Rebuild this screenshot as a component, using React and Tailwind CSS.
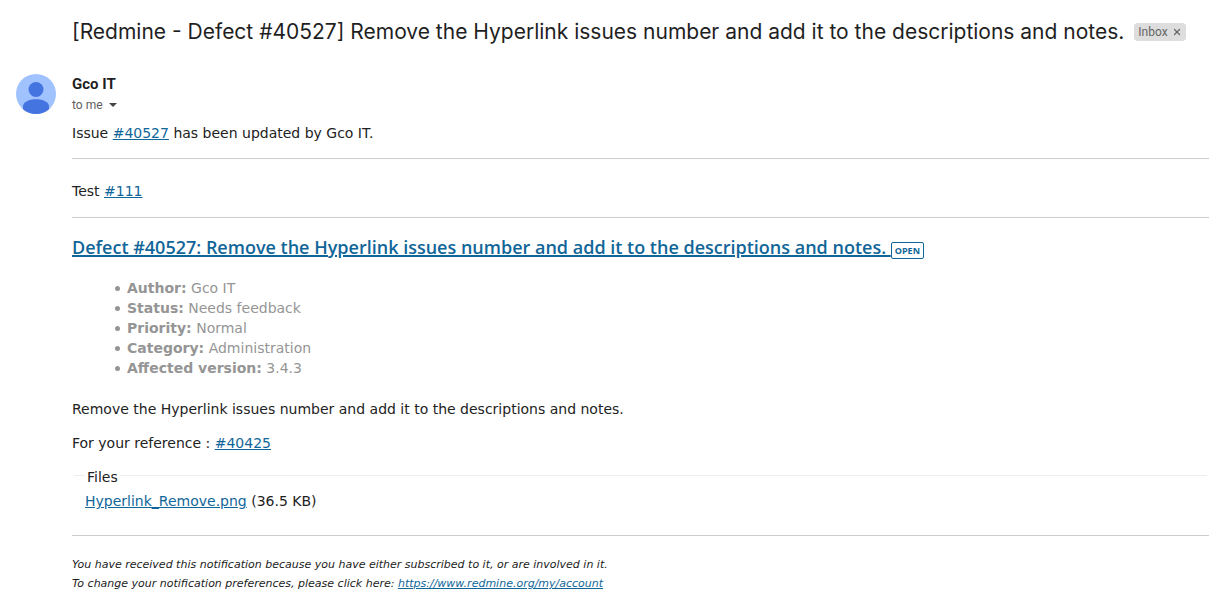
import { X } from "lucide-react";

const details = [
  { label: "Author", value: "Gco IT" },
  { label: "Status", value: "Needs feedback" },
  { label: "Priority", value: "Normal" },
  { label: "Category", value: "Administration" },
  { label: "Affected version", value: "3.4.3" },
];

const MailLink = ({ href, children }) => (
  <a href={href} className="text-[#116699] underline">{children}</a>
);

const Avatar = () => (
  <svg viewBox="0 0 40 40" className="w-10 h-10 shrink-0" role="img" aria-label="Gco IT">
    <defs>
      <clipPath id="avatar-clip">
        <circle cx="20" cy="20" r="20" />
      </clipPath>
    </defs>
    <g clipPath="url(#avatar-clip)">
      <rect width="40" height="40" fill="#a0c3ff" />
      <circle cx="20" cy="15.5" r="7.5" fill="#4374e0" />
      <path d="M7 32.5C7 28 13 25.3 20 25.3S33 28 33 32.5V40H7z" fill="#4374e0" />
    </g>
  </svg>
);

const SubjectBar = () => (
  <header className="flex items-center gap-2.5 pl-[72px] pr-4 pt-4">
    <h1 className="font-['Inter',sans-serif] text-[21px] leading-8 text-[#1f1f1f]">
      [Redmine - Defect #40527] Remove the Hyperlink issues number and add it to the descriptions and notes.
    </h1>
    <span className="flex items-center gap-1 h-[18px] px-1 rounded bg-[#dddddd] text-[#666666] font-['Roboto',sans-serif] text-xs whitespace-nowrap">
      Inbox
      <button type="button" aria-label="Remove label Inbox">
        <X className="w-2.5 h-2.5" strokeWidth={3} />
      </button>
    </span>
  </header>
);

const Sender = () => (
  <div className="font-['Roboto',sans-serif]">
    <div className="text-[15px] leading-5 font-bold text-[#1f1f1f]">Gco IT</div>
    <button type="button" className="flex items-center gap-1.5 mt-px text-xs leading-5 text-[#5e5e5e]">
      to me
      <svg viewBox="0 0 8 4" className="w-2 h-1" fill="#444444">
        <path d="M0 0h8L4 4z" />
      </svg>
    </button>
  </div>
);

const MailBody = () => (
  <div className="mt-2 font-['DejaVu_Sans',sans-serif] text-sm leading-5 text-[#222222]">
    <p>
      Issue <MailLink href="#40527">#40527</MailLink> has been updated by Gco IT.
    </p>
    <hr className="my-[15px] border-[#cccccc]" />
    <p className="py-[7px]">
      Test <MailLink href="#111">#111</MailLink>
    </p>
    <hr className="mt-[9px] border-[#cccccc]" />

    <div className="flex items-center mt-[15px]">
      <h2 className="font-['Open_Sans',sans-serif] text-lg leading-7 font-semibold">
        <a href="#40527" className="text-[#116699] underline decoration-2 whitespace-pre">
          {"Defect #40527: Remove the Hyperlink issues number and add it to the descriptions and notes. "}
        </a>
      </h2>
      <span className="mt-1.5 px-[3px] border border-[#116699] rounded-xs font-['Open_Sans',sans-serif] text-[9px] leading-[15px] font-bold text-[#116699]">
        OPEN
      </span>
    </div>

    <ul className="mt-[17px] pl-[43px] text-[#959595]">
      {details.map((item) => (
        <li key={item.label} className="flex items-center gap-[7px] before:size-[5px] before:rounded-full before:bg-current before:content-['']">
          <span>
            <strong>{item.label}:</strong> {item.value}
          </span>
        </li>
      ))}
    </ul>

    <p className="mt-[21px]">Remove the Hyperlink issues number and add it to the descriptions and notes.</p>
    <p className="mt-3.5">
      For your reference : <MailLink href="#40425">#40425</MailLink>
    </p>

    <fieldset className="mt-2.5 mx-0.5 px-[11px] border-t border-[#eeeeee]">
      <legend className="px-0.5 pt-1">Files</legend>
      <p className="mt-1">
        <MailLink href="#file">Hyperlink_Remove.png</MailLink> (36.5 KB)
      </p>
    </fieldset>

    <hr className="mt-6 border-[#cccccc]" />
    <footer className="mt-[19px] text-[11px] leading-[19px] italic">
      <p>You have received this notification because you have either subscribed to it, or are involved in it.</p>
      <p>
        To change your notification preferences, please click here:{" "}
        <MailLink href="https://www.redmine.org/my/account">https://www.redmine.org/my/account</MailLink>
      </p>
    </footer>
  </div>
);

const App = () => (
  <div className="bg-white">
    <SubjectBar />
    <main className="flex gap-4 pl-4 mt-[26px]">
      <Avatar />
      <div className="flex-1 min-w-0">
        <Sender />
        <MailBody />
      </div>
    </main>
  </div>
);

export default App;
